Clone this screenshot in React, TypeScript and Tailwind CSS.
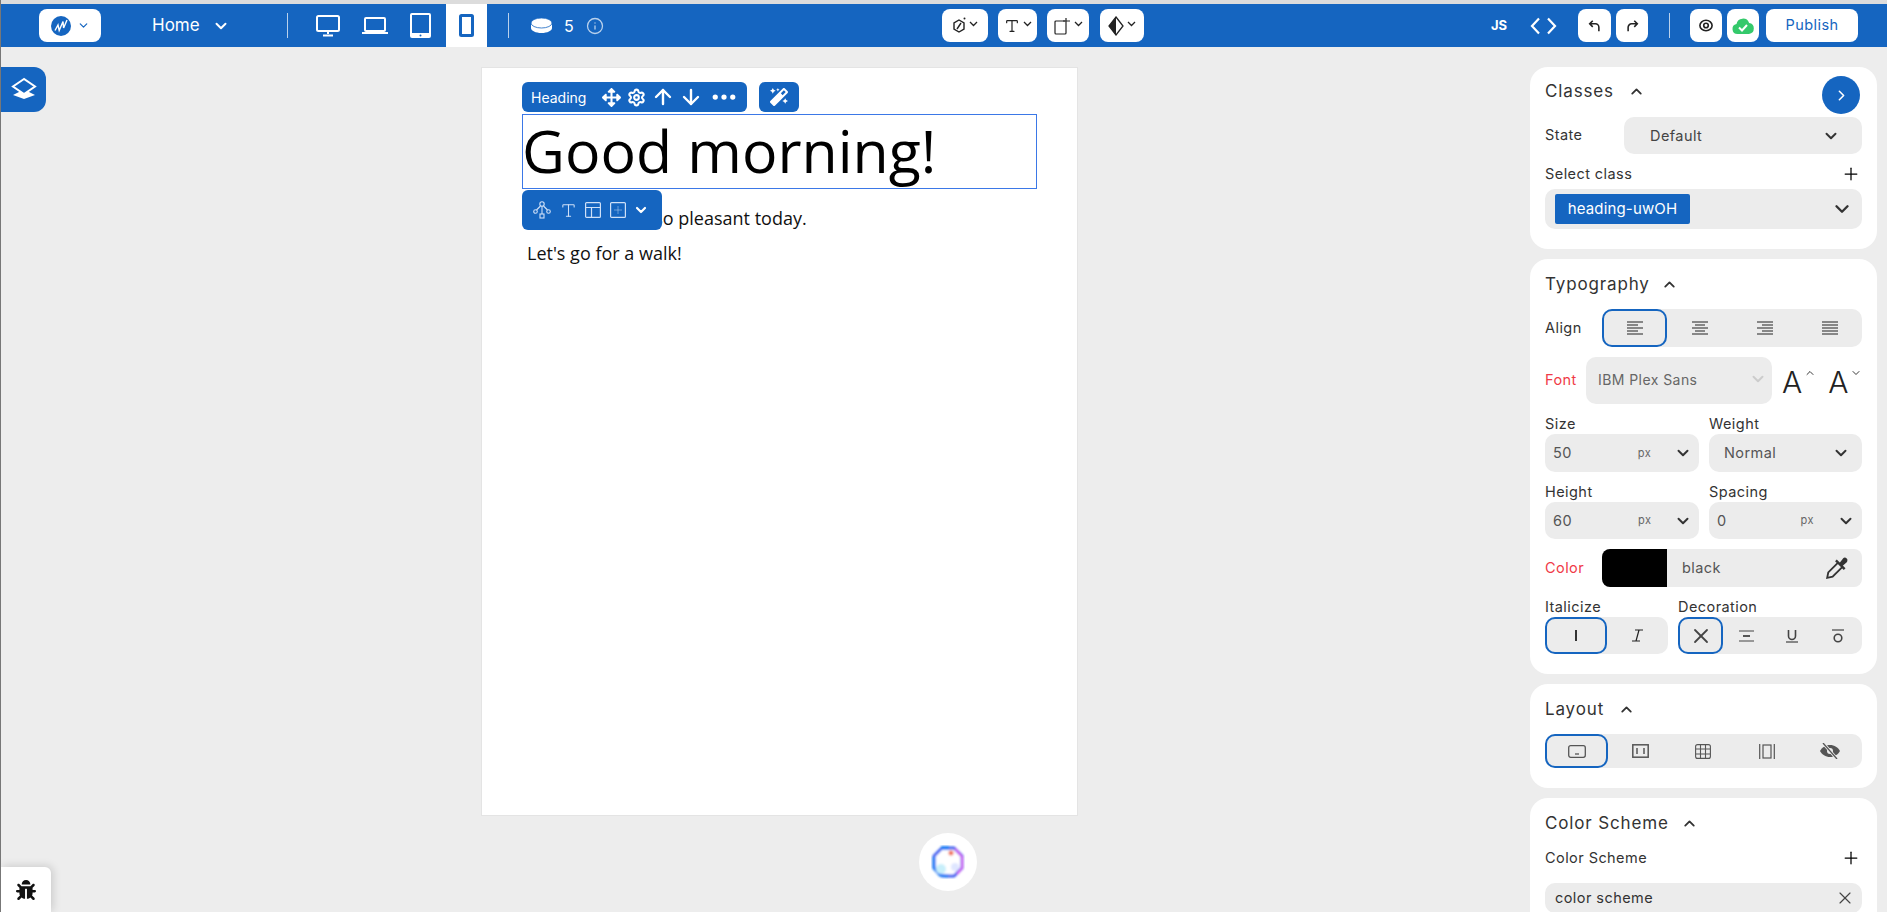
import { ArrowDown, ArrowUp, ChevronDown, ChevronRight, ChevronUp, Info, Plus, Settings, Type, X } from 'lucide-react'
import { BsThreeDots } from 'react-icons/bs'
import { FaArrowsAlt, FaBug, FaMagic } from 'react-icons/fa'

const ui = { fontFamily: 'Inter, sans-serif' }
const plex = { fontFamily: '"Open Sans", sans-serif' }

function PanelTitle({ title, gap }: { title: string; gap: number }) {
  return (
    <div className="flex h-6 items-center pt-[1px] text-[17px] tracking-[0.05em] text-[#333]">
      <span>{title}</span>
      <ChevronUp size={17} strokeWidth={2.6} style={{ marginLeft: gap }} />
    </div>
  )
}

function Chev({ size = 18, className = 'text-[#333]' }: { size?: number; className?: string }) {
  return <ChevronDown size={size} strokeWidth={2.6} className={className} />
}

function UnitSelect({ value, textLeft, pxLeft }: { value: string; textLeft: number; pxLeft: number }) {
  return (
    <div className="relative flex h-full items-center rounded-[10px] bg-[#ececec] text-[14.5px] tracking-[0.03em] text-[#555]">
      <span style={{ marginLeft: textLeft }}>{value}</span>
      <span className="text-[11px] text-[#666]" style={{ marginLeft: pxLeft }}>px</span>
      <span className="ml-auto mr-[7px]"><Chev /></span>
    </div>
  )
}

function AlignIcon({ widths, anchor }: { widths: number[]; anchor: 'start' | 'middle' | 'end' }) {
  return (
    <svg width="16" height="14" viewBox="0 0 16 14" stroke="#444" strokeWidth="1.2">
      {widths.map((w, i) => {
        const x = anchor === 'start' ? 0 : anchor === 'middle' ? (16 - w) / 2 : 16 - w
        return <line key={i} x1={x} x2={x + w} y1={1 + i * 3} y2={1 + i * 3} />
      })}
    </svg>
  )
}

function Segment({ active, width, children }: { active?: boolean; width: string; children: React.ReactNode }) {
  return (
    <div
      className={`flex h-full items-center justify-center rounded-[10px] ${width} ${active ? 'border-2 border-[#1565c0]' : ''}`}
    >
      {children}
    </div>
  )
}

function WhiteBtn({ width, margin, children }: { width: string; margin: string; children: React.ReactNode }) {
  return (
    <div className={`flex h-[33px] shrink-0 items-center justify-center rounded-[8px] bg-white text-[#222] ${width} ${margin}`}>
      {children}
    </div>
  )
}

function SmallChev() {
  return (
    <svg width="9" height="6" viewBox="0 0 9 6" fill="none" stroke="#222" strokeWidth="1.3" className="ml-[3px] mb-[3px]">
      <path d="M1 1l3.5 3.5L8 1" />
    </svg>
  )
}

function Divider({ margin }: { margin: string }) {
  return <div className={`h-[25px] w-px shrink-0 bg-white/70 ${margin}`} />
}

function Orb() {
  return (
    <svg width="34" height="34" viewBox="0 0 34 34">
      <defs>
        <filter id="soft"><feGaussianBlur stdDeviation="1.1" /></filter>
      </defs>
      <g filter="url(#soft)">
        <path d="M11 3l12 0 8 8 0 12-8 8-12 0-8-8 0-12z" fill="#fff" stroke="#3a5cf0" strokeWidth="3" strokeLinejoin="round" />
        <path d="M24 4l7 8 0 11-5 6" fill="none" stroke="#d65cf0" strokeWidth="2" />
        <path d="M3 12l0 11 6 7 8 1" fill="none" stroke="#1e7df5" strokeWidth="3" />
        <path d="M10 3l8 0" fill="none" stroke="#1e7df5" strokeWidth="4" />
        <circle cx="20" cy="8" r="2.5" fill="#f0705a" />
        <circle cx="10" cy="24" r="5" fill="#c8effa" />
        <circle cx="24" cy="22" r="4" fill="#dfe6ff" />
      </g>
    </svg>
  )
}

export default function App() {
  return (
    <div className="relative flex h-[912px] w-full flex-col overflow-hidden border-l border-[#777] bg-[#ededed]" style={ui}>
      <div className="h-1 shrink-0 bg-[#dcdcdc]" />

      {/* top bar */}
      <header className="flex h-[43px] shrink-0 items-center bg-[#1565c0] text-white">
        <WhiteBtn width="w-[62px]" margin="ml-[38px]">
          <svg width="22" height="22" viewBox="0 0 22 22">
            <circle cx="11" cy="11" r="10" fill="#1565c0" />
            <path d="M5 15.500l3-5.500 1.200 5.500L13 6.500l.6 6.500L17 5" fill="none" stroke="#fff" strokeWidth="1.400" />
          </svg>
          <ChevronDown size={13} strokeWidth={2.2} className="ml-[5px] text-[#1565c0]" />
        </WhiteBtn>
        <span className="ml-[51px] w-[51px] shrink-0 text-[17px]">Home</span>
        <ChevronDown size={18} strokeWidth={2.6} className="ml-[9px] shrink-0" />
        <Divider margin="ml-[57px]" />
        <svg className="ml-[28px] shrink-0" width="24" height="22" viewBox="0 0 24 22" fill="none" stroke="#fff" strokeWidth="2">
          <rect x="1" y="1" width="22" height="15" rx="1.5" />
          <path d="M12 16v3M7 20.5h10" />
        </svg>
        <svg className="ml-[22px] shrink-0" width="26" height="17" viewBox="0 0 26 17" fill="none" stroke="#fff" strokeWidth="2">
          <rect x="3" y="1" width="20" height="13" rx="1" />
          <path d="M0 16h26" />
        </svg>
        <svg className="ml-[22px] shrink-0" width="21" height="25" viewBox="0 0 21 25">
          <rect width="21" height="25" rx="2" fill="#fff" />
          <rect x="2" y="2" width="17" height="18" fill="#1565c0" />
          <circle cx="10.5" cy="22.5" r="1" fill="#1565c0" />
        </svg>
        <div className="ml-[15px] flex h-full w-[41px] shrink-0 items-center justify-center bg-white">
          <svg width="15" height="23" viewBox="0 0 15 23">
            <rect width="15" height="23" rx="2.5" fill="#1565c0" />
            <rect x="3" y="3" width="9" height="17" fill="#fff" />
          </svg>
        </div>
        <Divider margin="ml-[21px]" />
        <svg className="ml-[22px] shrink-0" width="21" height="15" viewBox="0 0 21 15">
          <path d="M0 5v5c0 2.8 4.700 5 10.500 5S21 12.800 21 10V5z" fill="#fff" />
          <ellipse cx="10.500" cy="5" rx="10.500" ry="5" fill="#fff" stroke="#1565c0" strokeWidth="0.8" />
        </svg>
        <span className="ml-[12px] w-[10px] shrink-0 text-[16px]">5</span>
        <Info size={18} strokeWidth={1.700} className="ml-[12px] shrink-0 text-white/70" />

        <WhiteBtn width="w-[46px]" margin="ml-[338px]">
          <svg width="14" height="17" viewBox="0 0 14 17" fill="none" stroke="#222" strokeWidth="1.400">
            <path d="M7 3l5 3v6l-5 3-5-3V6z" />
            <path d="M5 12l4-6" />
            <circle cx="12.500" cy="1.500" r="1" fill="#222" stroke="none" />
          </svg>
          <SmallChev />
        </WhiteBtn>
        <WhiteBtn width="w-[39px]" margin="ml-[10px]">
          <Type size={16} strokeWidth={1.800} />
          <SmallChev />
        </WhiteBtn>
        <WhiteBtn width="w-[42px]" margin="ml-[10px]">
          <svg width="17" height="18" viewBox="0 0 17 18" fill="none" stroke="#222" strokeWidth="1.200">
            <path d="M11 4H2a1 1 0 0 0-1 1v11a1 1 0 0 0 1 1h9a1 1 0 0 0 1-1V8" />
            <path d="M12 1v7M9 4h7" />
          </svg>
          <SmallChev />
        </WhiteBtn>
        <WhiteBtn width="w-[44px]" margin="ml-[11px]">
          <svg width="16" height="20" viewBox="0 0 16 20">
            <path d="M8 1l7 9-7 9-7-9z" fill="none" stroke="#222" strokeWidth="1.300" />
            <path d="M8 1v18l-7-9z" fill="#222" />
          </svg>
          <SmallChev />
        </WhiteBtn>

        <span className="ml-[347px] w-[17px] shrink-0 text-[13px] font-bold">JS</span>
        <svg className="ml-[22px] shrink-0" width="27" height="18" viewBox="0 0 27 18" fill="none" stroke="#fff" strokeWidth="2.200">
          <path d="M9 1.500L2 9l7 7.500M18 1.500L25 9l-7 7.500" />
        </svg>
        <WhiteBtn width="w-[33px]" margin="ml-[21px]">
          <svg width="13" height="14" viewBox="0 0 14 16" fill="none" stroke="#222" strokeWidth="1.800">
            <path d="M5 2L1.500 5.500 5 9M2 5.500h6a4 4 0 0 1 4 4V14" />
          </svg>
        </WhiteBtn>
        <WhiteBtn width="w-[32px]" margin="ml-[5px]">
          <svg width="13" height="14" viewBox="0 0 14 16" fill="none" stroke="#222" strokeWidth="1.800">
            <path d="M9 2l3.500 3.500L9 9M12 5.500H6a4 4 0 0 0-4 4V14" />
          </svg>
        </WhiteBtn>
        <Divider margin="ml-[21px]" />
        <WhiteBtn width="w-[32px]" margin="ml-[20px]">
          <svg width="16" height="13" viewBox="0 0 18 16" fill="none" stroke="#222" strokeWidth="2">
            <ellipse cx="9" cy="8" rx="7.500" ry="6.500" />
            <circle cx="9" cy="8" r="2.800" />
          </svg>
        </WhiteBtn>
        <WhiteBtn width="w-[32px]" margin="ml-[5px]">
          <svg width="24" height="24" viewBox="0 0 24 24">
            <path d="M6.500 20a5 5 0 0 1-1-9.900 6.500 6.500 0 0 1 12.600-1A5.500 5.500 0 0 1 18 20z" fill="#34c96b" />
            <path d="M8 13.500l3 3 5-5.500" fill="none" stroke="#fff" strokeWidth="2" />
          </svg>
        </WhiteBtn>
        <WhiteBtn width="w-[92px]" margin="ml-[7px]">
          <span className="pb-[1px] text-[14.5px] tracking-[0.03em] text-[#1565c0]">Publish</span>
        </WhiteBtn>
      </header>

      <div className="flex min-h-0 flex-1">
        {/* canvas area */}
        <main className="min-w-0 flex-1 pl-[480px] pt-5">
          <div className="relative h-[749px] w-[597px] border border-[#e4e4e4] bg-white pl-[40px] pt-[46px]" style={plex}>
            <div className="absolute left-[40px] top-[14px] flex h-[30px] w-[225px] items-center rounded-[6px] bg-[#1565c0] text-white" style={ui}>
              <span className="ml-[9px] w-[56px] text-[14px]">Heading</span>
              <FaArrowsAlt size={19} className="ml-[15px]" />
              <Settings size={19} strokeWidth={2.600} className="ml-[6px]" />
              <ArrowUp size={24} strokeWidth={2.400} className="ml-[5px]" />
              <ArrowDown size={24} strokeWidth={2.400} className="ml-[4px]" />
              <BsThreeDots size={28} className="ml-[7px]" />
            </div>
            <div className="absolute left-[277px] top-[14px] flex h-[30px] w-[40px] items-center justify-center rounded-[6px] bg-[#1565c0] text-white">
              <FaMagic size={18} />
            </div>

            <h1 className="flex h-[75px] w-[515px] items-center border border-[#3b78e7] pb-[3px] text-[59px] font-normal leading-none text-black">
              <span className="-ml-[1px] whitespace-nowrap">Good morning!</span>
            </h1>

            <div className="absolute left-[40px] top-[122px] flex h-[40px] w-[140px] items-center rounded-[6px] bg-[#1565c0] text-[#cfe0f7]">
              <svg className="ml-[11px]" width="18" height="18" viewBox="0 0 18 18" fill="none" stroke="currentColor" strokeWidth="1.100">
                <circle cx="9" cy="3" r="2.200" />
                <circle cx="2.500" cy="10.500" r="1.800" />
                <circle cx="15.500" cy="10.500" r="1.800" />
                <rect x="7" y="13" width="4" height="4" />
                <path d="M7.500 5L3.500 9M10.500 5l4 4M9 5v8" />
              </svg>
              <Type size={17} strokeWidth={1.500} className="ml-[9px]" />
              <svg className="ml-[8px]" width="16" height="16" viewBox="0 0 16 16" fill="none" stroke="currentColor" strokeWidth="1.200">
                <rect x="0.600" y="0.600" width="14.800" height="14.800" rx="1" />
                <path d="M1 5.500h14M6.500 5.500V15" />
              </svg>
              <svg className="ml-[9px]" width="16" height="16" viewBox="0 0 16 16" fill="none" stroke="currentColor" strokeWidth="1.200">
                <rect x="0.600" y="0.600" width="14.800" height="14.800" rx="1" />
                <path d="M8 4.500v7M4.500 8h7" strokeWidth="0.900" strokeDasharray="1 1" />
              </svg>
              <ChevronDown size={16} strokeWidth={3.200} className="ml-[7px] text-white" />
            </div>

            <div className="mt-[17px] pl-[5px] text-[18px] leading-[24px] text-[#111]">The weather is so pleasant today.</div>
            <div className="mt-[11px] pl-[5px] text-[18px] leading-[24px] text-[#111]">Let's go for a walk!</div>
          </div>
        </main>

        {/* right panel */}
        <aside className="flex w-[357px] shrink-0 flex-col gap-[10px] pr-[10px] pt-5 text-[14.5px] text-[#333]">
          <section className="relative shrink-0 rounded-[18px] bg-white px-[15px] pb-5 pt-[12px]">
            <PanelTitle title="Classes" gap={14} />
            <div className="absolute right-[17px] top-[9px] flex h-[38px] w-[38px] items-center justify-center rounded-full bg-[#1565c0] text-white">
              <ChevronRight size={17} strokeWidth={2.200} />
            </div>
            <div className="mt-[14px] flex h-[37px] items-center tracking-[0.03em]">
              <span className="w-[79px] pb-[2px]">State</span>
              <div className="flex h-full flex-1 items-center rounded-[10px] bg-[#ececec] pl-[26px] pr-[22px]">
                <span className="text-[#444]">Default</span>
                <span className="ml-auto"><Chev /></span>
              </div>
            </div>
            <div className="mt-[10px] flex h-5 items-center justify-between pb-[1px] tracking-[0.03em]">
              <span>Select class</span>
              <Plus size={20} strokeWidth={1.500} className="mr-[1px] text-black" />
            </div>
            <div className="mt-[5px] flex h-[40px] items-center rounded-[10px] bg-[#ececec] pl-[10px] pr-[9px]">
              <span className="flex h-[30px] w-[135px] items-center justify-center rounded-[2px] bg-[#1565c0] text-[15px] tracking-[0.01em] text-white">heading-uwOH</span>
              <span className="ml-auto"><Chev size={22} /></span>
            </div>
          </section>

          <section className="shrink-0 rounded-[18px] bg-white px-[15px] pb-5 pt-[13px]">
            <PanelTitle title="Typography" gap={11} />
            <div className="mt-[13px] flex h-[38px] items-center tracking-[0.03em]">
              <span className="w-[57px] pb-[1px]">Align</span>
              <div className="grid h-full flex-1 grid-cols-4 rounded-[10px] bg-[#ececec]">
                <Segment active width="w-full"><AlignIcon widths={[16, 11, 16, 11, 16]} anchor="start" /></Segment>
                <Segment width="w-full"><AlignIcon widths={[16, 10, 16, 10, 16]} anchor="middle" /></Segment>
                <Segment width="w-full"><AlignIcon widths={[16, 11, 16, 11, 16]} anchor="end" /></Segment>
                <Segment width="w-full"><AlignIcon widths={[16, 16, 16, 16, 16]} anchor="start" /></Segment>
              </div>
            </div>
            <div className="mt-[10px] flex h-[47px] tracking-[0.03em]">
              <span className="mt-[12px] w-[41px] shrink-0 text-[#f03a47]">Font</span>
              <div className="flex h-full w-[186px] shrink-0 items-center rounded-[10px] bg-[#ececec] pb-[3px] pl-[12px] pr-[5px] text-[14px] text-[#666]">
                <span>IBM Plex Sans</span>
                <span className="ml-auto"><Chev className="text-[#ccc]" /></span>
              </div>
              <div className="ml-[10px] flex h-full items-start pt-[8px] text-[#222]">
                <span className="text-[30px] font-light leading-[34px] tracking-normal">A</span>
                <ChevronUp size={12} strokeWidth={1.800} className="ml-[2px] mt-[2px]" />
                <span className="ml-[12px] text-[30px] font-light leading-[34px] tracking-normal">A</span>
                <ChevronDown size={12} strokeWidth={1.800} className="ml-[2px] mt-[2px]" />
              </div>
            </div>
            <div className="mt-[10px] grid grid-cols-[154px_153px] gap-x-[10px] tracking-[0.03em]">
              <span className="flex h-5 items-center pb-[1px]">Size</span>
              <span className="flex h-5 items-center pb-[1px]">Weight</span>
              <div className="h-[38px]"><UnitSelect value="50" textLeft={8} pxLeft={66} /></div>
              <div className="flex h-[38px] items-center rounded-[10px] bg-[#ececec] pl-[15px] pr-[12px] text-[#555]">
                <span>Normal</span>
                <span className="ml-auto"><Chev /></span>
              </div>
              <span className="mt-[10px] flex h-5 items-center pb-[1px]">Height</span>
              <span className="mt-[10px] flex h-5 items-center pb-[1px]">Spacing</span>
              <div className="h-[37px]"><UnitSelect value="60" textLeft={8} pxLeft={66} /></div>
              <div className="h-[37px]"><UnitSelect value="0" textLeft={8} pxLeft={74} /></div>
            </div>
            <div className="mt-[10px] flex h-[38px] items-center tracking-[0.03em]">
              <span className="w-[57px] pb-[1px] text-[#f03a47]">Color</span>
              <div className="flex h-full flex-1 items-center overflow-hidden rounded-[8px] bg-[#ececec]">
                <div className="h-full w-[65px] bg-black" />
                <span className="ml-[15px] pb-[1px] text-[#555]">black</span>
                <svg className="ml-auto mr-[13px]" width="24" height="24" viewBox="0 0 22 22" fill="none" stroke="#333" strokeWidth="1.700">
                  <path d="M12 6L3 15l-1 5 5-1 9-9" />
                  <path d="M10 4l8 8" strokeWidth="2.200" />
                  <path d="M14 7l3-4c1.500-1.500 3.500 0 2.500 2L15.500 8.500z" fill="#333" />
                </svg>
              </div>
            </div>
            <div className="mt-[10px] grid grid-cols-[123px_184px] gap-x-[10px] tracking-[0.03em]">
              <span className="flex h-5 items-center pb-[1px]">Italicize</span>
              <span className="flex h-5 items-center pb-[1px]">Decoration</span>
              <div className="flex h-[37px] rounded-[10px] bg-[#ececec]">
                <Segment active width="w-[62px]">
                  <span className="h-[11px] w-[1.500px] bg-[#333]" />
                </Segment>
                <Segment width="flex-1">
                  <svg width="13" height="13" viewBox="0 0 13 13" fill="none" stroke="#222" strokeWidth="1.200">
                    <path d="M4 1h8M1 12h8M8 1L5 12" />
                  </svg>
                </Segment>
              </div>
              <div className="flex h-[37px] rounded-[10px] bg-[#ececec]">
                <Segment active width="w-[45px]"><X size={24} strokeWidth={1.800} className="text-[#444]" /></Segment>
                <Segment width="w-[46px]">
                  <svg width="15" height="12" viewBox="0 0 15 12" fill="none" stroke="#444" strokeWidth="1.200">
                    <path d="M0 1h15M0 11h15" />
                    <path d="M4 6h7" strokeWidth="1.800" />
                  </svg>
                </Segment>
                <Segment width="w-[46px]">
                  <svg width="12" height="14" viewBox="0 0 12 14" fill="none" stroke="#444">
                    <path d="M2.500 1v6a3.500 3.500 0 0 0 7 0V1" strokeWidth="1.600" />
                    <path d="M0 13h12" strokeWidth="1.200" />
                  </svg>
                </Segment>
                <Segment width="w-[46px]">
                  <svg width="12" height="14" viewBox="0 0 12 14" fill="none" stroke="#444">
                    <path d="M0 1h12" strokeWidth="1.200" />
                    <circle cx="6" cy="9" r="3.800" strokeWidth="1.600" />
                  </svg>
                </Segment>
              </div>
            </div>
          </section>

          <section className="shrink-0 rounded-[18px] bg-white px-[15px] pb-5 pt-[13px]">
            <PanelTitle title="Layout" gap={14} />
            <div className="mt-[13px] grid h-[34px] grid-cols-5 rounded-[10px] bg-[#ececec]">
              <Segment active width="w-full">
                <svg width="18" height="13" viewBox="0 0 18 13" fill="none" stroke="#555" strokeWidth="1.300">
                  <rect x="0.700" y="0.700" width="16.600" height="11.600" rx="2" />
                  <path d="M7 9h4" />
                </svg>
              </Segment>
              <Segment width="w-full">
                <svg width="17" height="14" viewBox="0 0 17 14" fill="none" stroke="#555" strokeWidth="1.500">
                  <rect x="0.800" y="0.800" width="15.400" height="12.400" />
                  <path d="M5 4v6M12 4v6" />
                </svg>
              </Segment>
              <Segment width="w-full">
                <svg width="16" height="15" viewBox="0 0 16 15" fill="none" stroke="#555" strokeWidth="1.100">
                  <rect x="0.600" y="0.600" width="14.800" height="13.800" rx="2" />
                  <path d="M5.500 1v13M10.500 1v13M1 5h14M1 10h14" />
                </svg>
              </Segment>
              <Segment width="w-full">
                <svg width="16" height="15" viewBox="0 0 16 15" fill="none" stroke="#555" strokeWidth="1.200">
                  <path d="M0.700 0v15M15.300 0v15" />
                  <rect x="4" y="1" width="8" height="13" />
                </svg>
              </Segment>
              <Segment width="w-full">
                <svg width="20" height="16" viewBox="0 0 20 16">
                  <path d="M0 8c2-3.500 5.500-6 10-6s8 2.500 10 6c-2 3.500-5.500 6-10 6S2 11.500 0 8z" fill="#555" />
                  <circle cx="10" cy="8" r="3" fill="#ececec" />
                  <path d="M3 0l14 16" stroke="#ececec" strokeWidth="3" />
                  <path d="M3 0l14 16" stroke="#555" strokeWidth="1.300" />
                </svg>
              </Segment>
            </div>
          </section>

          <section className="shrink-0 rounded-[18px] bg-white px-[15px] pb-5 pt-[13px]">
            <PanelTitle title="Color Scheme" gap={12} />
            <div className="mt-[13px] flex h-5 items-center justify-between pb-[1px] tracking-[0.03em]">
              <span>Color Scheme</span>
              <Plus size={20} strokeWidth={1.500} className="mr-[1px] text-black" />
            </div>
            <div className="mt-[15px] flex h-[30px] items-center justify-between rounded-[10px] bg-[#ececec] pl-[10px] pr-[7px] tracking-[0.03em]">
              <span>color scheme</span>
              <X size={20} strokeWidth={1.400} className="text-[#444]" />
            </div>
          </section>
        </aside>
      </div>

      {/* floating bits */}
      <div className="absolute left-0 top-[67px] flex h-[45px] w-[45px] items-center justify-center rounded-r-[12px] bg-[#1565c0]">
        <svg width="26" height="26" viewBox="0 0 26 26">
          <path d="M13 15.500L2 21 13 25l11-4z" fill="#fff" transform="translate(0 -3)" />
          <path d="M13 2L2 9.500 13 17l11-7.500z" fill="#1565c0" stroke="#fff" strokeWidth="2" />
        </svg>
      </div>
      <div className="absolute bottom-0 left-0 flex h-[45px] w-[50px] items-center justify-center rounded-tr-[6px] bg-white shadow-[2px_-1px_8px_rgba(0,0,0,0.15)]">
        <FaBug size={20} className="text-[#111]" />
      </div>
      <div className="absolute bottom-[21px] left-[918px] flex h-[58px] w-[58px] items-center justify-center rounded-full bg-white">
        <Orb />
      </div>
    </div>
  )
}
